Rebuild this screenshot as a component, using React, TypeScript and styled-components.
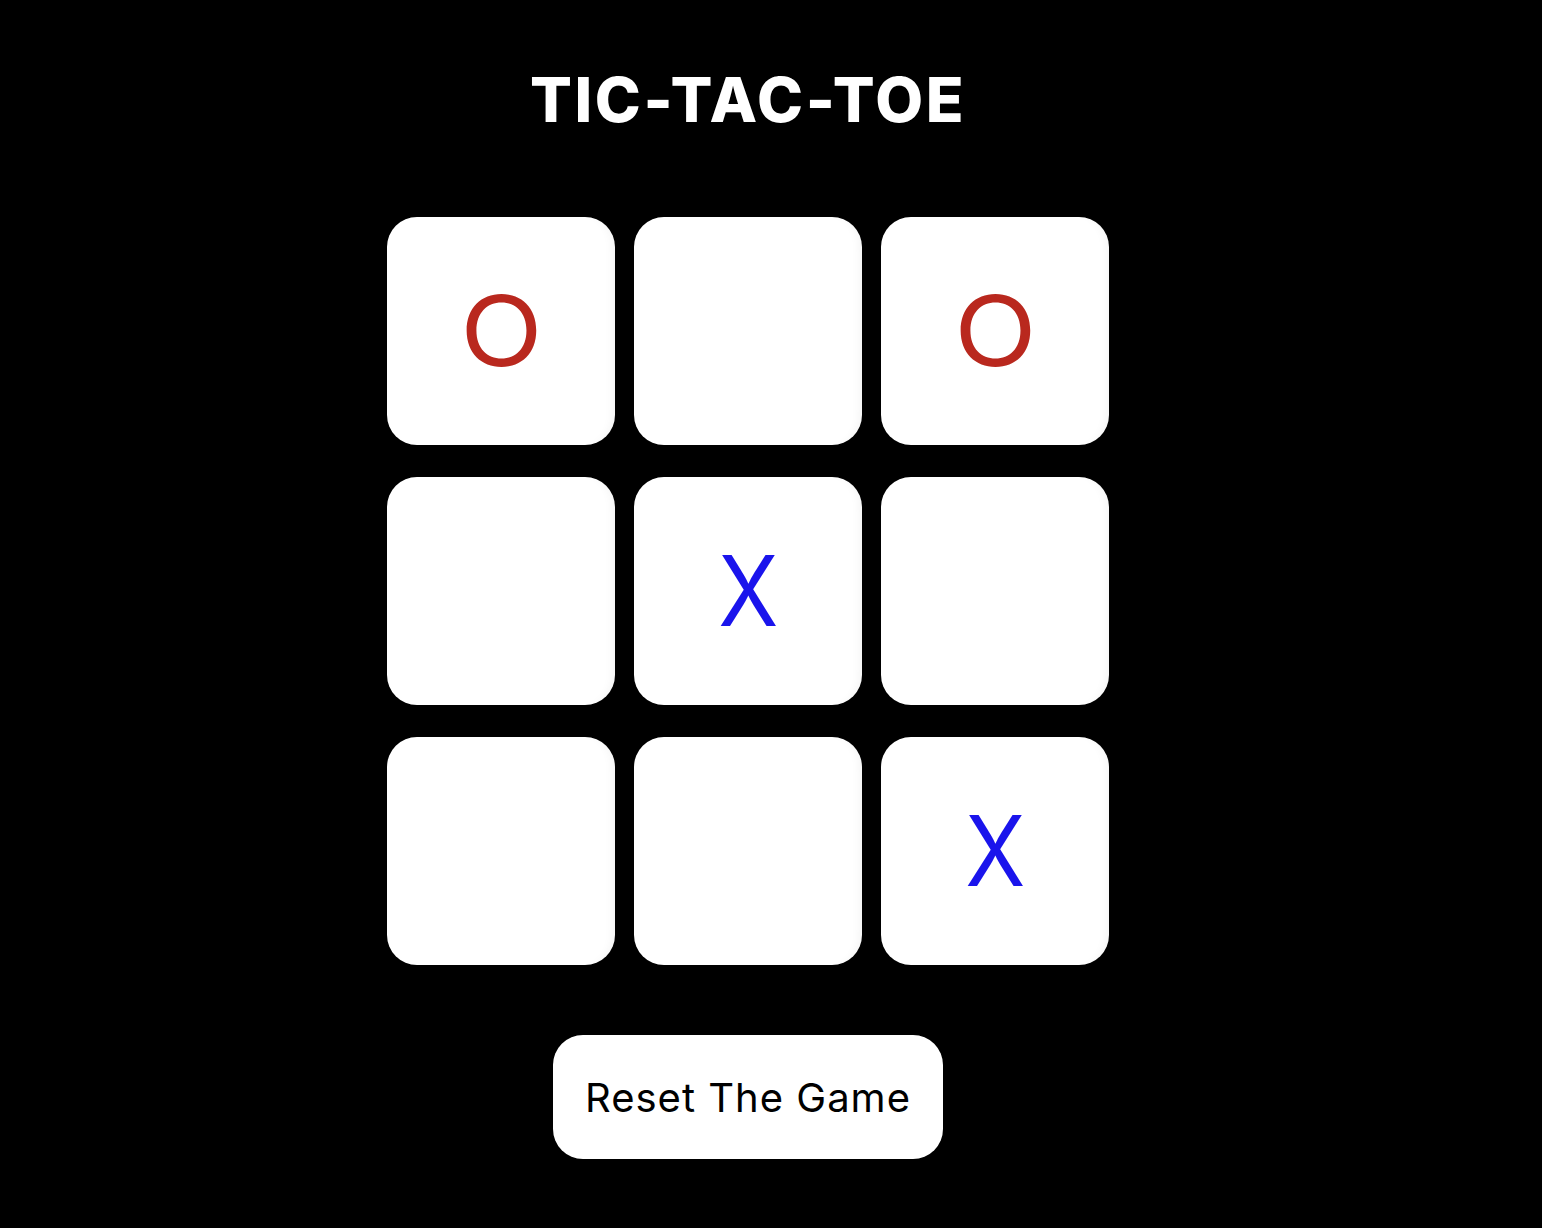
import * as React from "react"
import styled, { createGlobalStyle } from "styled-components"

type Mark = "X" | "O" | ""

const board: Mark[] = ["O", "", "O", "", "X", "", "", "", "X"]

const GlobalStyle = createGlobalStyle`
	html, body {
		margin: 0;
		padding: 0;
		background: #000;
	}
	body {
		font-family: "Inter", "Noto Sans", sans-serif;
	}
`

export default function App() {
	return (
		<>
			<GlobalStyle />
			<Page>
				<Title>TIC-TAC-TOE</Title>
				<Board>
					{board.map((mark, i) => (
						<Cell key={i}>
							<MarkText $mark={mark}>{mark}</MarkText>
						</Cell>
					))}
				</Board>
				<ResetButton>Reset The Game</ResetButton>
			</Page>
		</>
	)
}

const Page = styled.main`
	width: 1496px;
	height: 1228px;
	display: flex;
	flex-direction: column;
	align-items: center;
	box-sizing: border-box;
	padding-top: 66px;
`

const Title = styled.h1`
	margin: 0;
	color: #fff;
	font-family: "Inter", sans-serif;
	font-weight: 800;
	font-size: 62px;
	line-height: 68px;
	letter-spacing: 2.6px;
`

const Board = styled.div`
	margin-top: 83px;
	display: grid;
	grid-template-columns: repeat(3, 228px);
	grid-auto-rows: 228px;
	column-gap: 19px;
	row-gap: 32px;
`

const Cell = styled.div`
	display: flex;
	align-items: center;
	justify-content: center;
	background: #fff;
	border-radius: 30px;
	box-shadow: inset -10px 0 10px -8px rgba(0, 0, 0, 0.05);
`

const MarkText = styled.span<{ $mark: Mark }>`
	font-family: "Inter", sans-serif;
	font-size: 98px;
	font-weight: 400;
	line-height: 1;
	color: ${(p) => (p.$mark === "X" ? "#1a14ec" : "#b9281e")};
	transform: scaleX(${(p) => (p.$mark === "X" ? 0.9 : 1.1)});
`

const ResetButton = styled.button`
	margin-top: 70px;
	width: 390px;
	height: 124px;
	border: none;
	border-radius: 30px;
	background: #fff;
	color: #000;
	font-family: "Inter", sans-serif;
	font-size: 40px;
	font-weight: 400;
	letter-spacing: 1px;
	cursor: pointer;
`
